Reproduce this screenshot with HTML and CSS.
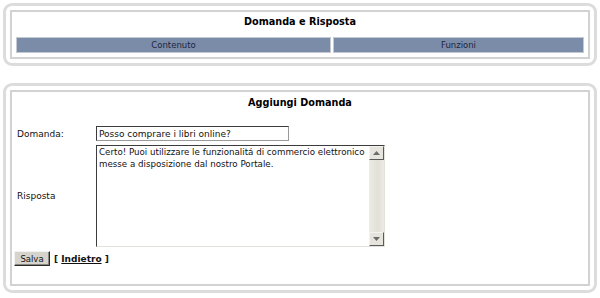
FILE: index.html
```html
<!DOCTYPE html>
<html lang="it">
<head>
<meta charset="utf-8">
<title>Domanda e Risposta</title>
<link rel="stylesheet" href="styles.css">
</head>
<body>
<div class="panel">
  <div class="inner">
    <div class="title">Domanda e Risposta</div>
    <div class="bar">
      <div class="cell cell-left">Contenuto</div>
      <div class="cell cell-right">Funzioni</div>
    </div>
  </div>
</div>
<div class="panel panel-form">
  <div class="inner inner-form">
    <div class="title">Aggiungi Domanda</div>
    <div class="form">
      <div class="row row-q">
        <label class="label" for="q">Domanda:</label>
        <input class="input" id="q" type="text" value="Posso comprare i libri online?">
      </div>
      <div class="row row-a">
        <label class="label" for="a">Risposta</label>
        <div class="area">
          <textarea class="area-text" id="a">Certo! Puoi utilizzare le funzionalitá di commercio elettronico messe a disposizione dal nostro Portale.</textarea>
          <div class="scroll">
            <div class="sbtn"><svg width="7" height="4" viewBox="0 0 7 4"><path d="M0 4 L3.5 0 L7 4 Z" fill="#6b6b6b"/></svg></div>
            <div class="track"></div>
            <div class="sbtn"><svg width="7" height="4" viewBox="0 0 7 4"><path d="M0 0 L3.5 4 L7 0 Z" fill="#6b6b6b"/></svg></div>
          </div>
        </div>
      </div>
      <div class="actions">
        <button class="btn" type="button">Salva</button>
        <span class="back">[ <a href="#" class="back-link">Indietro</a> ]</span>
      </div>
    </div>
  </div>
</div>
</body>
</html>
```
FILE: styles.css
```css
html, body {
  margin: 0;
  padding: 0;
  background: #ffffff;
}
body {
  font-family: "DejaVu Sans", Verdana, sans-serif;
  font-size: 9px;
  color: #111;
  padding-top: 3px;
}
.panel {
  margin: 0 3px;
  border: 3px solid #dcdcdc;
  border-radius: 9px;
  padding: 4px;
}
.panel-form {
  margin-top: 17px;
}
.inner {
  border: 2px solid #d2d2d2;
  padding: 0 4px 4px;
  background: #fff;
}
.title {
  height: 25px;
  line-height: 20px;
  text-align: center;
  font-weight: bold;
  font-size: 9.7px;
  color: #000;
}
.inner-form .title {
  height: 22px;
  line-height: 22px;
}
.bar {
  display: flex;
  gap: 2px;
}
.cell {
  height: 14px;
  line-height: 14px;
  border: 1px solid #c4c9d2;
  background: #7b8ca9;
  color: #1b2540;
  text-align: center;
  font-size: 8.5px;
}
.cell-left {
  width: 313px;
}
.cell-right {
  flex: 1;
}
.form {
  padding: 12px 0 14px 2px;
  margin-left: -4px;
}
.row {
  display: flex;
  align-items: center;
}
.label {
  width: 79px;
  padding-left: 3px;
  flex: none;
  font-size: 9px;
}
.row-a {
  margin-top: 4px;
}
.input {
  box-sizing: border-box;
  width: 193px;
  height: 15px;
  margin: 0;
  padding: 0 2px;
  border: 1px solid #9a9a9a;
  border-top-color: #3c3c3c;
  border-left-color: #3c3c3c;
  font-family: "DejaVu Sans", Verdana, sans-serif;
  font-size: 9px;
  color: #111;
  background: #fff;
  outline: none;
}
.area {
  box-sizing: border-box;
  width: 289px;
  height: 102px;
  display: flex;
  border: 1px solid #e4e2dc;
  border-top-color: #3c3c3c;
  border-left-color: #3c3c3c;
  background: #fff;
}
.area-text {
  flex: 1;
  margin: 0;
  padding: 0 2px;
  border: 0;
  resize: none;
  overflow: hidden;
  font-family: "DejaVu Sans", Verdana, sans-serif;
  font-size: 8.7px;
  line-height: 12px;
  color: #111;
  outline: none;
}
.scroll {
  width: 15px;
  display: flex;
  flex-direction: column;
  background: #ecebe5;
}
.sbtn {
  box-sizing: border-box;
  height: 14px;
  display: flex;
  align-items: center;
  justify-content: center;
  background: #e6e4dd;
  border: 1px solid #5a5a5a;
  border-top-color: #f4f3ef;
  border-left-color: #f4f3ef;
}
.track {
  flex: 1;
  background: linear-gradient(90deg, #ecebe4 0, #e2e1d9 60%, #eceae3 100%);
}
.actions {
  margin-top: 4px;
  display: flex;
  align-items: center;
  gap: 4px;
}
.btn {
  box-sizing: border-box;
  width: 36px;
  height: 15px;
  margin: 0;
  padding: 0;
  background: #d6d3cc;
  border: 1px solid #2a2a2a;
  border-top-color: #f2f2f2;
  border-left-color: #f2f2f2;
  box-shadow: inset -1px -1px 0 #8a8780;
  font-family: "DejaVu Sans", Verdana, sans-serif;
  font-size: 8.5px;
  color: #111;
}
.back {
  font-weight: bold;
  font-size: 9px;
}
.back-link {
  color: #111;
  text-decoration: underline;
}
```
